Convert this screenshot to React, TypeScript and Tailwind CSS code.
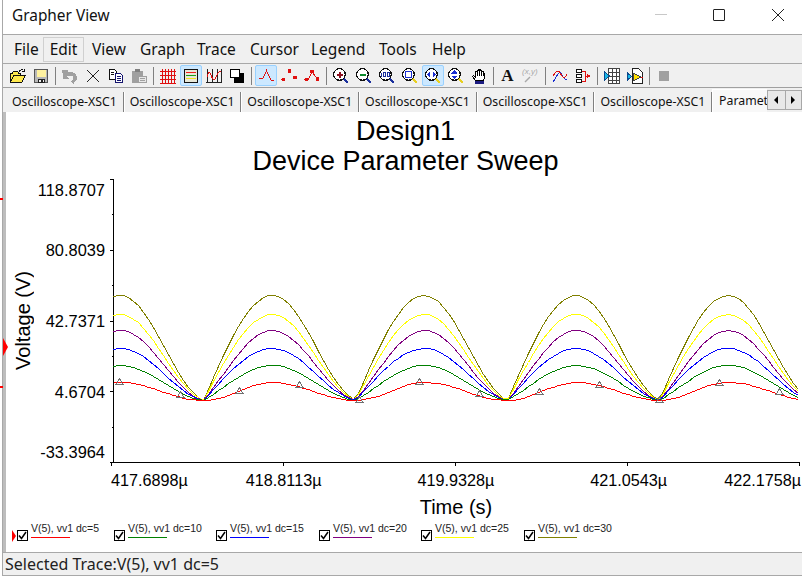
import type { ReactNode } from "react";

const arial = "font-['Liberation_Sans',Arial,sans-serif]";
const ui = "font-['Noto_Sans',sans-serif]";

const menus = [
  { label: "File", cls: "ml-[11px] w-[29px]" },
  { label: "Edit", cls: "w-[41px] justify-center border border-[#d0d0d0] h-[25px]" },
  { label: "View", cls: "ml-[8px] w-[48px]" },
  { label: "Graph", cls: "w-[57px]" },
  { label: "Trace", cls: "w-[53px]" },
  { label: "Cursor", cls: "w-[61px]" },
  { label: "Legend", cls: "w-[68px]" },
  { label: "Tools", cls: "w-[53px]" },
  { label: "Help", cls: "" },
];

const tabs = Array.from({ length: 6 }, () => "Oscilloscope-XSC1");

const traces = [
  { color: "#808000", amp: 105, blend: 0.05 },
  { color: "#ffff00", amp: 86, blend: 0.05 },
  { color: "#800080", amp: 70, blend: 0.25 },
  { color: "#0000ff", amp: 52, blend: 0.1 },
  { color: "#008000", amp: 35, blend: 0.25 },
  { color: "#ff0000", amp: 18, blend: 1 },
];

const markers = [
  [119, 382], [180, 395], [239, 391], [299, 385], [359, 400], [419, 382],
  [479, 394], [539, 392], [599, 385], [659, 400], [719, 383], [779, 392],
];

const legend = [
  { label: "V(5), vv1 dc=5", color: "bg-[#ff0000]", cls: "w-[97px]" },
  { label: "V(5), vv1 dc=10", color: "bg-[#008000]", cls: "w-[102px]" },
  { label: "V(5), vv1 dc=15", color: "bg-[#0000ff]", cls: "w-[103px]" },
  { label: "V(5), vv1 dc=20", color: "bg-[#800080]", cls: "w-[102px]" },
  { label: "V(5), vv1 dc=25", color: "bg-[#ffff00]", cls: "w-[103px]" },
  { label: "V(5), vv1 dc=30", color: "bg-[#808000]", cls: "w-[103px]" },
];

function tracePoints(amp: number, blend: number) {
  const pts: string[] = [];
  for (let x = 113; x <= 802; x += 5) {
    const t = (x - 51) % 152;
    let s: number;
    if (t < 69) {
      const u = t / 69;
      s = (1 - blend) * Math.sin((u * Math.PI) / 2) + (blend * (1 - Math.cos(u * Math.PI))) / 2;
    } else {
      const u = (t - 69) / 83;
      const mix = 0.25 * (1 - blend);
      s = (1 - mix) * ((1 + Math.cos(u * Math.PI)) / 2) + mix * Math.cos((u * Math.PI) / 2);
    }
    pts.push(`${x + 0.5},${Math.round(400 - amp * s) + 0.5}`);
  }
  return pts.join(" ");
}

const Icon = ({ children }: { children: ReactNode }) => (
  <svg width="16" height="16" viewBox="0 0 16 16" fill="none" shapeRendering="crispEdges">
    {children}
  </svg>
);

const Lens = ({ children, handle = "#1a2f9c" }: { children?: ReactNode; handle?: string }) => (
  <>
    <path d="M10 10l5 5" stroke={handle} strokeWidth="2.400" />
    <circle cx="6.500" cy="6.500" r="5.800" fill="#fff" stroke="#111" strokeWidth="1.200" />
    {children}
  </>
);

const Tool = ({ children, active }: { children: ReactNode; active?: boolean }) => (
  <div className="w-[23px] h-[23px] flex items-center justify-center">
    <div
      className={
        active
          ? "w-[22px] h-[21px] flex items-center justify-center rounded-[2px] bg-[#cce8ff] border border-[#99d1ff]"
          : "w-[22px] h-[21px] flex items-center justify-center"
      }
    >
      {children}
    </div>
  </div>
);

const Sep = () => (
  <div className="w-[6px] h-[23px] flex justify-center items-center">
    <div className="w-px h-[18px] bg-[#808080]" />
  </div>
);

const Toolbar = () => (
  <div className="h-[23px] flex items-center pl-[3px] bg-[#f0f0f0] border-b border-[#a0a0a0] box-content">
    <Tool>
      <Icon>
        <path d="M.500 14V5h2l1-1.500h4l1 1.500h2v2H4L.500 14h11.500l3.500-7H4" fill="#ffe94d" stroke="#111" />
        <path d="M9 3.500c1.500-2 3-2 4-1.500M14.500 .500v3h-3" stroke="#111" />
      </Icon>
    </Tool>
    <Tool>
      <Icon>
        <path d="M1.500 1.500h13v13h-13z" fill="#b8b8b8" stroke="#555" />
        <path d="M3.500 2h9v7h-9z" fill="#fff2a0" />
        <path d="M5 11h6v3.500H5z" fill="#f0f0f0" stroke="#222" />
        <path d="M8 12h1.500v2H8z" fill="#222" />
      </Icon>
    </Tool>
    <Sep />
    <Tool>
      <Icon>
        <path d="M0 2h6.500L5 4.500c4-1.200 9.500-.2 10 4.500 .3 3-2 5-3.500 6.500L9 13.500c1.500-1.500 3-3 2.500-4.500-.5-1.500-3.500-2-6.500-.5l2 2.500H1.500z" fill="#a0a0a0" />
      </Icon>
    </Tool>
    <Tool>
      <Icon>
        <path d="M2 2l12 12M14 2L2 14" stroke="#222" strokeWidth="1.300" />
      </Icon>
    </Tool>
    <Tool>
      <Icon>
        <path d="M1.500 1.500h5l2 2v8h-7z" fill="#fff" stroke="#111" />
        <path d="M7.500 5.500h5l2 2v7h-7z" fill="#fff" stroke="#14146e" />
        <path d="M9 8.500h4M9 10.500h4M9 12.500h4" stroke="#14146e" />
        <path d="M3 4.500h3M3 6.500h3" stroke="#111" />
      </Icon>
    </Tool>
    <Tool>
      <Icon>
        <path d="M1 3h11v12H1z" fill="#a0a0a0" />
        <path d="M4 1h5v3H4z" fill="#808080" />
        <path d="M7.500 8.500h7.500v6H7.500z" fill="#e8e8e8" stroke="#a0a0a0" />
        <path d="M9 10.500h4.500M9 12.500h4.500" stroke="#a0a0a0" />
      </Icon>
    </Tool>
    <Sep />
    <Tool>
      <Icon>
        <path d="M2.500 1v15M5.500 1v15M8.500 1v15M11.500 1v15M14.500 1v15M0 3.500h16M0 7.500h16M0 11.500h16M0 15.500h16" stroke="#e01010" />
      </Icon>
    </Tool>
    <Tool active>
      <Icon>
        <path d="M1.500 1.500h13v13h-13z" fill="#e8e8d8" stroke="#111" />
        <path d="M3 4.500h10" stroke="#f02020" strokeWidth="1.500" />
        <path d="M3 7.500h10" stroke="#18a018" strokeWidth="1.500" />
        <path d="M3 10.500h10" stroke="#f0e020" strokeWidth="1.500" />
      </Icon>
    </Tool>
    <Tool>
      <Icon>
        <path d="M1.500 1v13M6.500 1v13M11.500 1v13M15.500 1v13M0 14.500h16" stroke="#222" />
        <path d="M1 9c1.500-6 3-6 4.500-1s3 5 4.500 1 3-6 5-5" stroke="#e01010" />
      </Icon>
    </Tool>
    <Tool>
      <Icon>
        <path d="M5 5h10v10H5z" fill="#000" />
        <path d="M1.500 1.500h9v8h-9z" fill="#fff" stroke="#000" />
      </Icon>
    </Tool>
    <Sep />
    <Tool active>
      <Icon>
        <path d="M1 10.500h3.500l1-1L8.500 2.500l3 7 2 3h2" stroke="#e01010" />
      </Icon>
    </Tool>
    <Tool>
      <Icon>
        <circle cx="2.500" cy="11.500" r="2" fill="#e01010" />
        <circle cx="8.500" cy="3" r="2" fill="#e01010" />
        <circle cx="14" cy="9.500" r="2" fill="#e01010" />
      </Icon>
    </Tool>
    <Tool>
      <Icon>
        <path d="M2 11.500h2.500L8 3.500l5.500 8" stroke="#e01010" />
        <circle cx="2.500" cy="11.500" r="2" fill="#e01010" />
        <circle cx="8" cy="3.500" r="2" fill="#e01010" />
        <circle cx="13.500" cy="11" r="2" fill="#e01010" />
      </Icon>
    </Tool>
    <Sep />
    <Tool>
      <Icon>
        <Lens>
          <path d="M3.500 6.500h6M6.500 3.500v6" stroke="#8c1020" strokeWidth="2" />
        </Lens>
      </Icon>
    </Tool>
    <Tool>
      <Icon>
        <Lens>
          <path d="M3.500 6.500h6" stroke="#0c8a2c" strokeWidth="2" />
        </Lens>
      </Icon>
    </Tool>
    <Tool>
      <Icon>
        <Lens>
          <path d="M2.500 4.500v4M4.500 4.500h2v4h-2zM8 4.500h2v4H8z" stroke="#1a2f9c" />
        </Lens>
      </Icon>
    </Tool>
    <Tool>
      <Icon>
        <Lens handle="#e8d020">
          <path d="M3.500 3.500h6v6h-6z" stroke="#1a2fd0" strokeWidth="1.200" />
        </Lens>
      </Icon>
    </Tool>
    <Tool active>
      <Icon>
        <Lens handle="#e8d020">
          <path d="M2 6.500l3-3v6zM11 6.500l-3-3v6z" fill="#1a2fd0" />
        </Lens>
      </Icon>
    </Tool>
    <Tool>
      <Icon>
        <Lens handle="#e8d020">
          <path d="M6.500 2L3.500 5.500h6zM6.500 11L3.500 7.500h6z" fill="#1a2fd0" />
        </Lens>
      </Icon>
    </Tool>
    <Tool>
      <Icon>
        <path d="M4.500 12.500L1.500 8.500l1-1 2 1.500V3.500h1.500V2h1.500v-1h1.500v1.500h1.500V3.500H12V5h1.500v5l-1 2.500z" fill="#fff" stroke="#000" />
        <path d="M6 3v5M8 2v6M10 3v5M12 5v3" stroke="#000" />
        <path d="M4 13h9v3H4z" fill="#1a1a80" />
      </Icon>
    </Tool>
    <Sep />
    <Tool>
      <span className="font-['Liberation_Serif',serif] font-bold text-[17px] leading-none text-[#111]">A</span>
    </Tool>
    <Tool>
      <div className="relative w-[17px] h-[16px]">
        <span className={`absolute -top-px left-0 whitespace-nowrap italic text-[8px] leading-[10px] text-[#a8a8a8] ${arial}`}>(x,y)</span>
        <svg className="absolute inset-0" width="17" height="16" viewBox="0 0 17 16" fill="none">
          <path d="M8 9l-5 5" stroke="#a8a8a8" strokeWidth="1.500" />
        </svg>
      </div>
    </Tool>
    <Sep />
    <Tool>
      <Icon>
        <path d="M1 14L6 6c2-3 3-2 4 1s2 4 5 5" stroke="#1a2fd0" />
        <path d="M1 8c2-3 3-5 5-5 2 0 3 5 5 6 1.500 1 2 1 4-3" stroke="#e01010" />
      </Icon>
    </Tool>
    <Tool>
      <Icon>
        <path d="M1.500 1.500h5v3h-5zM1.500 6.500h5v3h-5zM1.500 11.500h5v3h-5z" fill="#fff" stroke="#111" />
        <path d="M6.500 3h4v10h-4" stroke="#e01010" />
        <path d="M10.500 8h2" stroke="#e01010" />
        <path d="M12 5.500L15.500 8 12 10.500z" fill="#e01010" />
      </Icon>
    </Tool>
    <Sep />
    <Tool>
      <Icon>
        <path d="M4.500 .500h11v15h-11zM4.500 4.500h11M4.500 8.500h11M4.500 12.500h11M8.500 .500v15M12.500 .500v15" fill="#fff" stroke="#444" />
        <path d="M.500 4l5 4-5 4z" fill="#18b8e8" stroke="#0c4a8c" />
      </Icon>
    </Tool>
    <Tool>
      <Icon>
        <path d="M5.500 .500h6l4 4v11h-10z" fill="#fff" stroke="#222" />
        <path d="M6 5l8 4-8 4z" fill="#ffe000" stroke="#444" />
        <path d="M.500 5l4 3.500-4 3.500z" fill="#18b8e8" stroke="#0c4a8c" />
        <path d="M14 9h2" stroke="#e01010" />
      </Icon>
    </Tool>
    <Sep />
    <Tool>
      <div className="w-[10px] h-[10px] bg-[#a0a0a0]" />
    </Tool>
  </div>
);

const Plot = () => (
  <svg width="696" height="292" viewBox="106 176 696 292" fill="none">
    <g shapeRendering="crispEdges">
      <path d="M113.500 179v283M110 462.500h689.500M111.500 462v4M283.500 462v4M455.500 462v4M627.500 462v4M799.500 462v4" stroke="#000" />
      <path d="M110 179.500h3M110 250.500h3M110 321.500h3M110 391.500h3M112 214.500h1M112 285.500h1M112 356.500h1M112 427.500h1" stroke="#000" />
      {traces.map((t) => (
        <polyline key={t.color} points={tracePoints(t.amp, t.blend)} stroke={t.color} />
      ))}
      {markers.map(([x, y]) => (
        <polygon key={x} points={`${x + 0.5},${y - 3.5} ${x + 4},${y + 2.5} ${x - 3},${y + 2.5}`} stroke="#707070" />
      ))}
    </g>
  </svg>
);

const YLabel = ({ text, cls }: { text: string; cls: string }) => (
  <div className={`h-[18px] leading-[18px] ${cls}`}>{text}</div>
);

export default function App() {
  return (
    <div className="relative w-[802px] h-[576px] overflow-hidden bg-white pl-[2px]">
      <div className="h-full flex flex-col border-l border-[#a8a8a8]">
        {/* title bar */}
        <div className={`h-[34px] shrink-0 flex items-center pl-[9px] bg-white text-[15.400px] text-[#111] ${ui}`}>
          <span className="flex-1 -mt-[3px]">Grapher View</span>
          <div className="w-[12px] h-px bg-[#c8c8c8] mr-[46px] -mt-[5px]" />
          <div className="w-[12px] h-[12px] border border-[#222] rounded-[1px] mr-[46px] -mt-[4px]" />
          <svg className="mr-[17px] -mt-[4px]" width="14" height="14" viewBox="0 0 14 14" fill="none">
            <path d="M1 1l12 12M13 1L1 13" stroke="#222" />
          </svg>
        </div>

        {/* menu bar */}
        <div className={`h-[30px] shrink-0 flex items-center pt-[1px] border-y border-[#a8a8a8] bg-[#f0f0f0] text-[15.500px] text-[#111] ${ui}`}>
          {menus.map((m) => (
            <div key={m.label} className={`flex items-center ${m.cls}`}>
              {m.label}
            </div>
          ))}
        </div>

        <Toolbar />

        {/* document tabs */}
        <div className={`h-[24px] shrink-0 flex items-end bg-[#f0f0f0] text-[12.300px] text-[#111] ${ui}`}>
          <div className="w-[3px]" />
          {tabs.map((t, i) => (
            <div key={i} className="w-[118px] h-[20px] flex items-center pl-[6px] border-r border-[#808080] shadow-[1px_0_0_#fff] whitespace-nowrap">
              {t}
            </div>
          ))}
          <div className="w-[55px] h-[23px] flex items-center pl-[6px] bg-[#f8f8f8] border-t border-l border-white overflow-hidden whitespace-nowrap">
            Paramet
          </div>
          <div className="flex h-[20px] self-start mt-[2px] border border-[#a8a8a8] bg-[#e8e8e8]">
            <div className="w-[18px] flex items-center justify-center border-r border-[#a8a8a8]">
              <div className="w-0 h-0 border-y-[4px] border-y-transparent border-r-[4px] border-r-black" />
            </div>
            <div className="w-[15px] flex items-center justify-center">
              <div className="w-0 h-0 border-y-[4px] border-y-transparent border-l-[4px] border-l-black" />
            </div>
          </div>
        </div>

        {/* graph page */}
        <div className={`flex-1 flex flex-col border-l-[3px] border-[#bdbdbd] bg-white text-black ${arial}`}>
          <div className="pt-[4px] pl-[3px] text-center text-[27px] leading-[30px]">
            <div>Design1</div>
            <div>Device Parameter Sweep</div>
          </div>

          <div className="flex h-[292px]">
            <div className="w-[30px] pl-[3px] flex items-center justify-center">
              <span className="[writing-mode:vertical-rl] rotate-180 text-[20px] leading-[20px] whitespace-nowrap mt-[-3px]">Voltage (V)</span>
            </div>
            <div className="w-[70px] pr-[1px] text-right text-[16.400px]">
              <YLabel text="118.8707" cls="mt-[5px]" />
              <YLabel text="80.8039" cls="mt-[42px]" />
              <YLabel text="42.7371" cls="mt-[53px]" />
              <YLabel text="4.6704" cls="mt-[53px]" />
              <YLabel text="-33.3964" cls="mt-[42px]" />
            </div>
            <Plot />
          </div>

          <div className="flex h-[18px] mt-[3px] ml-[105px] text-[16.200px] leading-[18px] whitespace-nowrap">
            <span>417.6898µ</span>
            <span className="ml-[58px]">418.8113µ</span>
            <span className="ml-[96px]">419.9328µ</span>
            <span className="ml-[96px]">421.0543µ</span>
            <span className="ml-[57px]">422.1758µ</span>
          </div>

          <div className="mt-[7px] pl-[104px] text-center text-[20px] leading-[23px]">Time (s)</div>

          <div className="flex mt-[2px] ml-[11px] h-[31px]">
            {legend.map((l) => (
              <div key={l.label} className={`flex items-start ${l.cls}`}>
                <div className="mt-[9px] w-[11px] h-[11px] border border-black bg-white flex items-center justify-center shrink-0">
                  <svg width="9" height="9" viewBox="0 0 9 9" fill="none">
                    <path d="M1 4.500l2.500 3L8 1" stroke="#000" strokeWidth="1.500" />
                  </svg>
                </div>
                <div className="ml-[3px] w-[39px]">
                  <div className="h-[15px] text-[10.500px] leading-[15px] text-[#222] whitespace-nowrap">{l.label}</div>
                  <div className={`mt-[1px] h-px ${l.color}`} />
                </div>
              </div>
            ))}
          </div>
        </div>

        {/* status bar */}
        <div className={`h-[24px] shrink-0 flex items-center pl-[2px] border-t border-b border-[#a8a8a8] bg-[#f0f0f0] text-[16px] leading-none text-[#222] ${ui}`}>
          Selected Trace:V(5), vv1 dc=5
        </div>
      </div>

      {/* red cursor marks that spill past the graph's left edge */}
      <div className="absolute left-0 top-[198px] w-[3px] h-[2px] bg-[#ff0000]" />
      <div className="absolute left-0 top-[386px] w-[3px] h-[2px] bg-[#ff0000]" />
      <div className="absolute left-[3px] top-[338px] w-0 h-0 border-y-[9px] border-y-transparent border-l-[5px] border-l-[#ff0000]" />
      <div className="absolute left-[12px] top-[530px] w-0 h-0 border-y-[6px] border-y-transparent border-l-[4px] border-l-[#ff0000]" />
    </div>
  );
}
